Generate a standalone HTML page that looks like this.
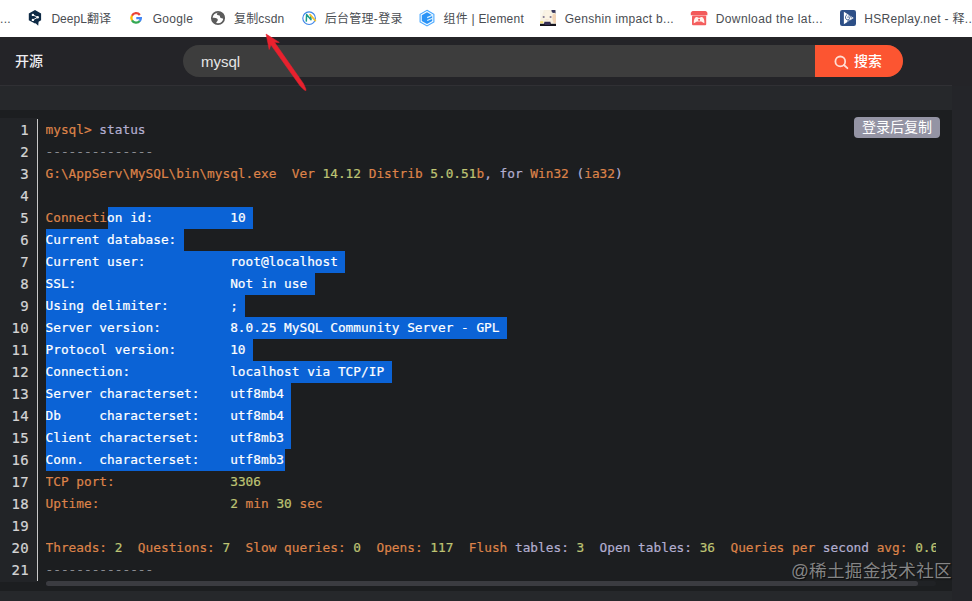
<!DOCTYPE html>
<html lang="zh-CN">
<head>
<meta charset="utf-8">
<title>mysql status</title>
<style>
*{box-sizing:border-box;margin:0;padding:0}
html,body{width:972px;height:601px;overflow:hidden;background:#242529;font-family:"Liberation Sans","Noto Sans CJK SC",sans-serif}
#bm{position:absolute;left:0;top:0;width:972px;height:37px;background:#fff;color:#4a4d52;font-size:12px}
#bm span{position:absolute;top:1px;height:37px;line-height:37px;white-space:nowrap}
#bm svg{position:absolute}
#hd{position:absolute;left:0;top:37px;width:972px;height:49px;background:#242428}
#hdline{position:absolute;left:0;top:85px;width:952px;height:1px;background:#303034}
#kaiyuan{position:absolute;left:15px;top:50px;font-size:14px;line-height:22px;color:#ececf0;font-weight:500}
#search{position:absolute;left:183px;top:45px;width:720px;height:32px;border-radius:16px;background:#3d3d3d;overflow:hidden}
#search .q{position:absolute;left:18px;top:1px;line-height:32px;font-size:15px;color:#e6e6e6}
#search .btn{position:absolute;right:0;top:0;width:88px;height:32px;background:#fc5531;color:#fff;font-size:14px;line-height:32px}
#search .btn b{position:absolute;left:39px;top:0;font-weight:500}
#band{position:absolute;left:0;top:86px;width:952px;height:24px;background:#26282b}
#right{position:absolute;left:952px;top:86px;width:20px;height:515px;background:#242529}
#bottom{position:absolute;left:0;top:591px;width:952px;height:10px;background:#26282b}
#code{position:absolute;left:0;top:110px;width:952px;height:481px;background:#1c1e20;overflow:hidden}
#gut{position:absolute;left:0;top:8px;width:37px;height:464px;background:#222427}
#nums{position:absolute;left:0;top:9px;width:37px;text-align:right;padding-right:8px;color:#d4d4d4;font:14px/22px "DejaVu Sans Mono","Liberation Mono",monospace;letter-spacing:0.37px;-webkit-text-stroke:0.2px}
#vline{position:absolute;left:37px;top:9px;width:1px;height:462px;background:#c8c8c8}
#pre{position:absolute;left:46px;top:9px;width:890px;height:470px;overflow:hidden;font-family:"DejaVu Sans Mono","Liberation Mono",monospace;font-size:12.79px;-webkit-text-stroke:0.2px}
.ln{height:22px;line-height:22px;white-space:pre;position:relative;left:-0.5px}
.sel{position:absolute;height:22px;background:#0b63d6;display:block}
.o{color:#dd8349}.l{color:#b3aed0}.n{color:#bfc474}.c{color:#8b8d92}.w{color:#fff}.g{color:#abb2bf}
#copy{position:absolute;left:854px;top:117px;width:86px;height:21px;border-radius:4px;background:#9494a4;color:#fff;font-size:14px;line-height:21px;text-align:center}
#sb{position:absolute;left:46px;top:581px;width:890px;height:5px;background:#202225;border-radius:3px}
#sb i{position:absolute;left:0;top:0;width:872px;height:5px;background:#3b3c41;border-radius:3px}
#wm{position:absolute;left:791px;top:558px;font-size:17.6px;letter-spacing:.25px;line-height:26px;color:rgba(170,170,170,.75);text-shadow:1px 1px 1px rgba(0,0,0,.6);white-space:nowrap}
#arrow{position:absolute;left:0;top:0}
</style>
</head>
<body>
<div id="bm">
<span style="left:0;letter-spacing:.3px">...</span>
<span style="left:51.4px;letter-spacing:.03px">DeepL翻译</span>
<span style="left:152.7px;letter-spacing:.33px">Google</span>
<span style="left:234px;letter-spacing:.17px">复制csdn</span>
<span style="left:324.7px;letter-spacing:.29px">后台管理-登录</span>
<span style="left:443.5px;letter-spacing:.22px">组件 | Element</span>
<span style="left:564.7px;letter-spacing:.31px">Genshin impact b...</span>
<span style="left:715.7px;letter-spacing:.41px">Download the lat...</span>
<span style="left:864.2px;letter-spacing:.3px">HSReplay.net - 释...</span>
<svg width="972" height="37" viewBox="0 0 972 37" style="left:0;top:0">
<!-- DeepL -->
<path d="M35 10 L41.1 13.4 L41.1 20.3 L38.6 21.7 L38.2 25.7 L35.6 23.3 L35 23.6 L28.8 20.3 L28.8 13.4 Z" fill="#0f2b46"/>
<path d="M32.9 14.9 L37.7 17.3 L32.9 19.9" fill="none" stroke="#fff" stroke-width="0.9"/>
<circle cx="32.9" cy="14.9" r="1.2" fill="#fff"/><circle cx="37.7" cy="17.3" r="1.2" fill="#fff"/><circle cx="32.9" cy="19.9" r="1.2" fill="#fff"/>
<!-- Google G -->
<g fill="none" stroke-width="2.3">
<path d="M139.84 15.03 A4.75 4.75 0 0 0 131.91 15.72" stroke="#ea4335"/>
<path d="M131.99 15.57 A4.75 4.75 0 0 0 132.07 20.47" stroke="#fbbc05"/>
<path d="M131.99 20.32 A4.75 4.75 0 0 0 139.84 20.87" stroke="#34a853"/>
<path d="M139.74 21.00 A4.75 4.75 0 0 0 140.85 18.05 L136.30 18.05" stroke="#4285f4"/>
</g>
<!-- globe -->
<circle cx="218" cy="18" r="6.2" fill="#fff" stroke="#5c5c5c" stroke-width="1.7"/>
<path d="M216.8 13.6 C218.6 12 222 12.2 223.4 13.8 C224.8 15.6 224.8 18 223.8 19.4 C222.6 18 221 18.8 220.2 17.6 C219.5 16.5 220.6 15.9 219.3 15.5 C218.2 15.2 216.6 15.2 216.8 13.6 Z" fill="#5c5c5c"/>
<path d="M211.8 18.2 C213.4 17.4 215.6 17.8 217 18.6 C218.2 19.4 218 20.8 217 21.5 C216.2 22.1 216.5 23.2 215.6 24.2 C213.4 23.4 211.9 21 211.8 18.2 Z" fill="#5c5c5c"/>
<!-- N ring -->
<circle cx="309.1" cy="18.2" r="6.3" fill="#fff" stroke="#3f86e8" stroke-width="1.1"/>
<path d="M306.3 21.6 L306.6 14.6 L311 19.8 L310.8 15.2" fill="none" stroke="#1a9c8c" stroke-width="1.5" stroke-linejoin="round"/>
<path d="M310 14.6 L315.4 20.6" stroke="#f2c230" stroke-width="1.7" stroke-linecap="round"/>
<!-- Element -->
<path d="M427 10.3 L433.9 14.2 L433.9 22 L427 25.9 L420.1 22 L420.1 14.2 Z" fill="#f2faff" stroke="#4aa8ff" stroke-width="1.1"/>
<path d="M427 12.3 L432.2 15.2 L432.2 21 L427 23.9 L421.8 21 L421.8 15.2 Z" fill="#2a93f6"/>
<path d="M427.2 17.6 L432.6 15.3 M427.2 20.5 L432.6 18.2" stroke="#e2f6ff" stroke-width="1.15"/>
<!-- Genshin -->
<g>
<rect x="540" y="10" width="16" height="16" fill="#f7f1e2"/>
<path d="M540 10 L544 10 L542.5 14 L540.8 19 L540 22 Z" fill="#fbf8f0"/>
<path d="M545 10.5 C546 13 545 15 543.6 18.5 C545.5 21.5 550 21.8 552.2 18.5 C552.6 15.5 551 12.5 549.5 10.8 Z" fill="#fbf3e4"/>
<path d="M551.4 10 L555.4 10 L555.6 13.4 L554.4 12.8 L553 13 L551.8 12 Z" fill="#3a395e"/>
<path d="M552.6 14.4 L554.8 13.6 L556 15 L556 23.5 L553.6 23 L552.4 19 Z" fill="#f2d3b5"/>
<ellipse cx="543.7" cy="17" rx="1.1" ry="0.8" fill="#5a4f78"/>
<ellipse cx="550.6" cy="17" rx="1.1" ry="0.8" fill="#5a4f78"/>
<path d="M545.6 19.6 Q547.1 20.4 548.6 19.6" stroke="#e9c8b0" stroke-width="0.5" fill="none"/>
<rect x="540.2" y="21.2" width="3" height="2" fill="#f3df74"/>
<path d="M544.4 21.8 L550.4 21.8 L551.4 26 L543.6 26 Z" fill="#332b50"/>
<rect x="540" y="23.8" width="16" height="2.2" fill="#15141d"/>
<rect x="544.6" y="23.4" width="5.6" height="1.4" fill="#3c3560"/>
</g>
<!-- itch -->
<path d="M693 11 L705.2 11 Q706.4 11 707 12.2 L707.4 13.4 L707.4 15.2 L690.8 15.2 L690.8 13.4 L691.2 12.2 Q691.8 11 693 11 Z" fill="#f25a5a"/>
<rect x="692" y="15.4" width="14.2" height="9.9" rx="1" fill="#f45e5e"/>
<path d="M693.8 23.2 C693.6 19.8 694.6 17.2 696.6 17 C698 16.9 698.2 18 699.1 18 C700 18 700.2 16.9 701.6 17 C703.6 17.2 704.6 19.8 704.4 23.2 C702.8 23.2 702.2 21.6 701 21.6 L697.2 21.6 C696 21.6 695.4 23.2 693.8 23.2 Z" fill="#fff4ee"/>
<rect x="698.2" y="18.9" width="1.8" height="1.8" fill="#f25a5a"/>
<!-- HSReplay -->
<rect x="840" y="10" width="16" height="16" rx="2.2" fill="#2d4f87"/>
<path d="M843.9 11.8 L853.7 18 L843.9 24.2 Z" fill="#fff"/>
<path d="M846.9 14.6 C845.3 15.6 845 18 846.1 19.2 C847.2 20.4 849.3 19.9 849.5 18.3 C849.6 17.1 848.5 16.4 847.6 17 M849 15.6 C850.2 16 851 16.9 851.5 18 M847.6 21.2 C848.6 21 849.4 20.6 850 19.9" fill="none" stroke="#2d4f87" stroke-width="0.85" stroke-linecap="round"/>
</svg>
</div>
<div id="hd"></div>
<div id="hdline"></div>
<div id="kaiyuan">开源</div>
<div id="search"><div class="q">mysql</div><div class="btn"><svg width="24" height="24" viewBox="0 0 24 24" style="position:absolute;left:13px;top:4px"><circle cx="12.3" cy="12.4" r="4.9" fill="none" stroke="#ffddd3" stroke-width="1.8"/><path d="M15.9 16 L19.4 19.2" stroke="#ffddd3" stroke-width="1.8" stroke-linecap="round"/></svg><b>搜索</b></div></div>
<div id="band"></div>
<div id="right"></div>
<div id="bottom"></div>
<div id="code">
<div id="gut"></div>
<div id="nums"><div>1</div><div>2</div><div>3</div><div>4</div><div>5</div><div>6</div><div>7</div><div>8</div><div>9</div><div>10</div><div>11</div><div>12</div><div>13</div><div>14</div><div>15</div><div>16</div><div>17</div><div>18</div><div>19</div><div>20</div><div>21</div></div>
<div id="vline"></div>
<div id="pre"><div style="position:absolute;left:0;top:0"><i class="sel" style="left:61.6px;top:88px;width:145.3px"></i><i class="sel" style="left:0.0px;top:110px;width:137.6px"></i><i class="sel" style="left:0.0px;top:132px;width:299.3px"></i><i class="sel" style="left:0.0px;top:154px;width:268.5px"></i><i class="sel" style="left:0.0px;top:176px;width:199.2px"></i><i class="sel" style="left:0.0px;top:198px;width:461.0px"></i><i class="sel" style="left:0.0px;top:220px;width:206.9px"></i><i class="sel" style="left:0.0px;top:242px;width:345.5px"></i><i class="sel" style="left:0.0px;top:264px;width:245.4px"></i><i class="sel" style="left:0.0px;top:286px;width:245.4px"></i><i class="sel" style="left:0.0px;top:308px;width:245.4px"></i><i class="sel" style="left:0.0px;top:330px;width:238.7px"></i></div>
<div class="ln"><span class="o">mysql&gt;</span><span class="l"> status</span></div>
<div class="ln"><span class="c">--------------</span></div>
<div class="ln"><span class="o">G:\AppServ\MySQL\bin\mysql.exe  Ver </span><span class="n">14.12</span><span class="o"> Distrib </span><span class="n">5.0.51</span><span class="o">b</span><span class="l">, for </span><span class="o">Win32</span><span class="l"> (</span><span class="o">ia32</span><span class="l">)</span></div>
<div class="ln"></div>
<div class="ln"><span class="o">Connecti</span><span class="w">on id:          10</span></div>
<div class="ln"><span class="w">Current database:</span></div>
<div class="ln"><span class="w">Current user:           root@localhost</span></div>
<div class="ln"><span class="w">SSL:                    Not in use</span></div>
<div class="ln"><span class="w">Using delimiter:        ;</span></div>
<div class="ln"><span class="w">Server version:         8.0.25 MySQL Community Server - GPL</span></div>
<div class="ln"><span class="w">Protocol version:       10</span></div>
<div class="ln"><span class="w">Connection:             localhost via TCP/IP</span></div>
<div class="ln"><span class="w">Server characterset:    utf8mb4</span></div>
<div class="ln"><span class="w">Db     characterset:    utf8mb4</span></div>
<div class="ln"><span class="w">Client characterset:    utf8mb3</span></div>
<div class="ln"><span class="w">Conn.  characterset:    utf8mb3</span></div>
<div class="ln"><span class="o">TCP port:</span><span class="l">               </span><span class="n">3306</span></div>
<div class="ln"><span class="o">Uptime:</span><span class="l">                 </span><span class="n">2</span><span class="o"> min </span><span class="n">30</span><span class="o"> sec</span></div>
<div class="ln"></div>
<div class="ln"><span class="o">Threads: </span><span class="n">2</span><span class="o">  Questions: </span><span class="n">7</span><span class="o">  Slow queries: </span><span class="n">0</span><span class="o">  Opens: </span><span class="n">117</span><span class="o">  Flush </span><span class="l">tables: </span><span class="n">3</span><span class="l">  Open tables: </span><span class="n">36</span><span class="o">  Queries per </span><span class="l">second </span><span class="o">avg: </span><span class="n">0.667</span></div>
<div class="ln"><span class="c">--------------</span></div>
</div>
</div>
<div id="copy">登录后复制</div>
<div id="sb"><i></i></div>
<div id="wm">@稀土掘金技术社区</div>
<svg id="arrow" width="972" height="601" viewBox="0 0 972 601"><path d="M266.1 34.1 L279.3 42.4 L274.5 42.2 L303.5 83.7 L305.8 88.9 L305.9 90.6 L304.3 89.9 L300.2 86.0 L270.9 44.8 L269.2 49.5 Z" fill="#e8212e" stroke="#e8212e" stroke-width="0.6" stroke-linejoin="round"/></svg>
</body>
</html>
